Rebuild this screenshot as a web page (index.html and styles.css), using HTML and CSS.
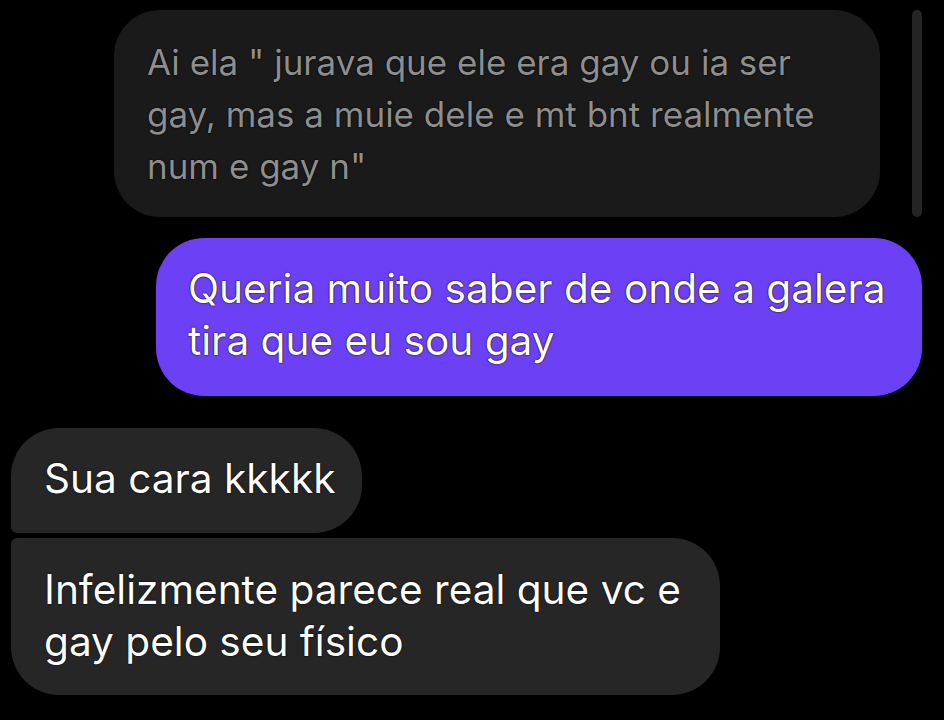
FILE: index.html
```html
<!DOCTYPE html>
<html lang="pt">
<head>
<meta charset="utf-8">
<link rel="stylesheet" href="styles.css">
</head>
<body>
<div class="chat">
  <div class="scrollbar"></div>
  <div class="row row-quoted">
    <div class="bubble quoted">Ai ela " jurava que ele era gay ou ia ser gay, mas a muie dele e mt bnt realmente num e gay n"</div>
  </div>
  <div class="row row-out">
    <div class="bubble out">Queria muito saber de onde a galera tira que eu sou gay</div>
  </div>
  <div class="row row-in first">
    <div class="bubble in in-top">Sua cara kkkkk</div>
  </div>
  <div class="row row-in next">
    <div class="bubble in in-bottom">Infelizmente parece real que vc e gay pelo seu físico</div>
  </div>
</div>
</body>
</html>
```
FILE: styles.css
```css
html, body {
  margin: 0;
  padding: 0;
  background: #000;
}
body {
  width: 944px;
  height: 720px;
  overflow: hidden;
  font-family: Inter, Roboto, "Noto Sans", sans-serif;
}
.chat {
  position: relative;
  display: flex;
  flex-direction: column;
  padding: 10px 22px 0 11px;
}
.scrollbar {
  position: absolute;
  top: 10px;
  right: 22px;
  width: 10px;
  height: 207px;
  border-radius: 5px;
  background: #242424;
}
.row {
  display: flex;
}
.row-quoted {
  justify-content: flex-end;
  padding-right: 42px;
}
.row-out {
  justify-content: flex-end;
  margin-top: 21px;
}
.row-in.first {
  margin-top: 32px;
}
.row-in.next {
  margin-top: 5px;
}
.bubble {
  box-sizing: border-box;
  text-shadow: 0 0 1.5px #000, 0 0 1px #000;
}
.quoted {
  width: 766px;
  height: 207px;
  padding: 26px 40px 0 33px;
  background: #1a1a1a;
  color: #8e8e8e;
  font-size: 35px;
  line-height: 52px;
  border-radius: 46px;
}
.out {
  width: 766px;
  height: 158px;
  padding: 25px 24px 0 32px;
  background: #6c40f5;
  color: #fff;
  font-size: 40.6px;
  line-height: 52px;
  border-radius: 48px;
}
.in {
  background: #262626;
  color: #fff;
  font-size: 40.6px;
  line-height: 52px;
  padding: 25px 27px 0 33px;
}
.in-top {
  height: 105px;
  border-radius: 48px 48px 48px 6px;
}
.in-bottom {
  width: 709px;
  height: 157px;
  padding-top: 26px;
  border-radius: 6px 48px 48px 48px;
}
```
